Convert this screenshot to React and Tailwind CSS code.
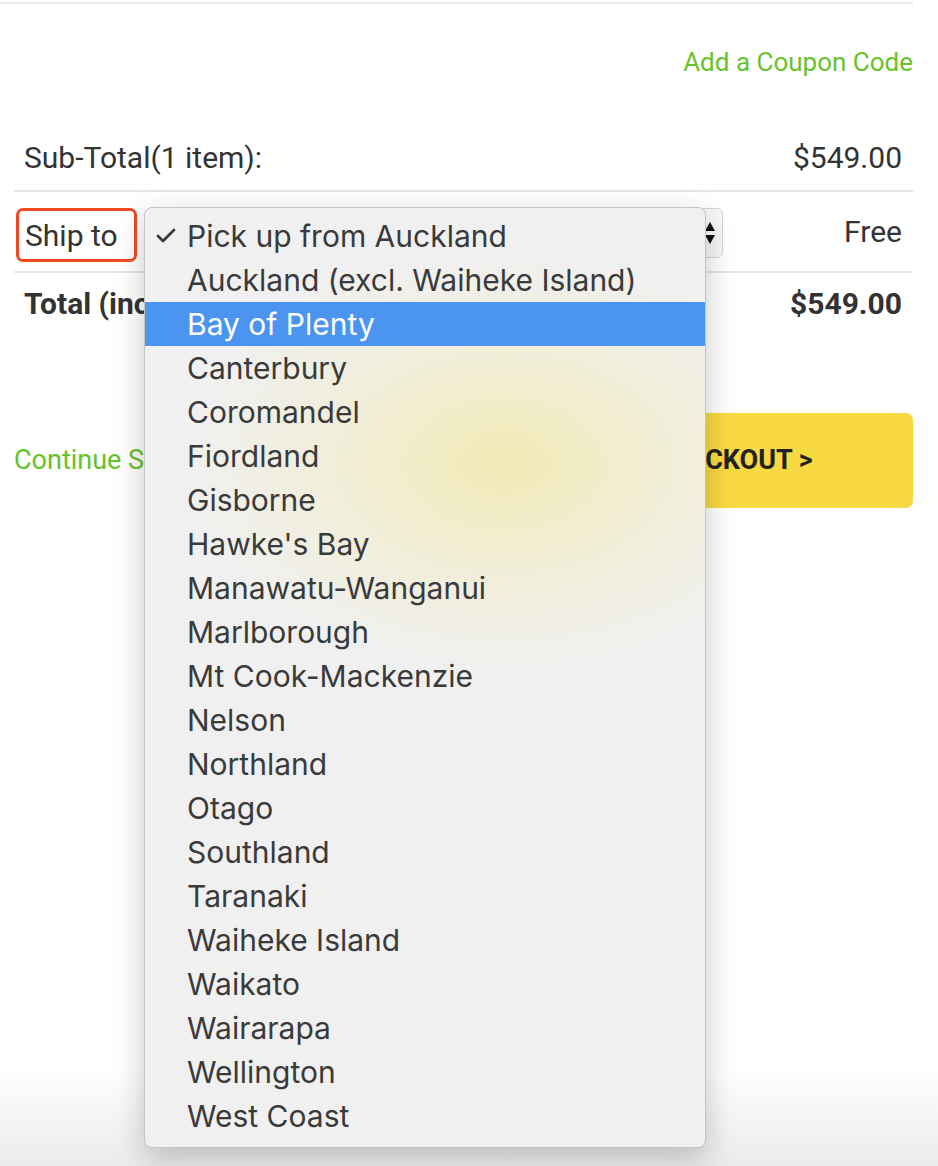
import { Check } from 'lucide-react';

const regions = [
  'Pick up from Auckland',
  'Auckland (excl. Waiheke Island)',
  'Bay of Plenty',
  'Canterbury',
  'Coromandel',
  'Fiordland',
  'Gisborne',
  "Hawke's Bay",
  'Manawatu-Wanganui',
  'Marlborough',
  'Mt Cook-Mackenzie',
  'Nelson',
  'Northland',
  'Otago',
  'Southland',
  'Taranaki',
  'Waiheke Island',
  'Waikato',
  'Wairarapa',
  'Wellington',
  'West Coast',
];

function App() {
  return (
    <div className="relative w-[938px] h-[1166px] bg-white overflow-hidden flex flex-col font-['Roboto',sans-serif] text-[#333]">
      {/* Cart summary */}
      <div className="mt-[2px] mr-[25px] border-t-2 border-[#e8e8e8]">
        <div className="pt-[42px] flex justify-end">
          <a className="text-[26px] leading-[32px] text-[#68c22c]">Add a Coupon Code</a>
        </div>

        <div className="ml-[14px] mt-[63px]">
          <div className="flex items-center justify-between pl-[10px] pr-[11px] pb-[15px] border-b-2 border-[#e6e6e6] text-[30px] leading-[34px]">
            <span>Sub-Total(1 item):</span>
            <span>$549.00</span>
          </div>

          <div className="flex items-start h-[81px] pt-[16px] pl-[2px] pr-[11px] border-b-2 border-[#e6e6e6] text-[30px]">
            <span className="h-[54px] w-[121px] flex items-center pl-[6px] border-[3px] border-[#f04a24] rounded-[7px]">Ship to</span>
            {/* native select, mostly hidden by its open popup */}
            <div className="ml-[11px] w-[575px] h-[50px] border border-[#d4d4d4] rounded-[6px] bg-[#f7f7f7] flex items-center justify-end pr-[6px]">
              <svg width="12" height="30" viewBox="0 0 12 30">
                <path d="M6 4 L11 13 L1 13 Z" fill="#111" />
                <path d="M6 26 L11 17 L1 17 Z" fill="#111" />
              </svg>
            </div>
            <span className="ml-auto leading-[48px]">Free</span>
          </div>

          <div className="flex items-center justify-between h-[60px] pl-[10px] pr-[11px] text-[30px] font-bold">
            <span>Total (incl. GST):</span>
            <span>$549.00</span>
          </div>

          <div className="mt-[80px] flex items-center justify-between">
            <a className="text-[27px] text-[#68c22c]">Continue Shopping</a>
            <button className="w-[360px] h-[95px] rounded-[7px] bg-[#f9d942] text-[27px] font-bold text-[#222] flex items-center justify-center">
              CHECKOUT &gt;
            </button>
          </div>
        </div>
      </div>

      <div className="flex-1" />
      {/* bottom fade */}
      <div className="h-[100px] bg-gradient-to-b from-white to-[#ebebeb]" />

      {/* open select popup */}
      <div className="absolute left-[144px] top-[207px] w-[562px] h-[941px] rounded-[8px] border border-[#c4c4c4] bg-[#f0f0f0] shadow-[0_10px_30px_rgba(0,0,0,0.22)] overflow-hidden font-['Inter',sans-serif]">
        <div className="absolute inset-0 bg-[radial-gradient(ellipse_320px_210px_at_360px_255px,rgba(242,233,178,0.95),rgba(242,236,195,0.55)_50%,rgba(240,240,240,0)_100%)]" />
        <ul className="relative pt-[6px]">
          {regions.map((name, i) => (
            <li
              key={name}
              className={
                i === 2
                  ? 'h-[44px] flex items-center pl-[42px] text-[30px] bg-[#4b95f1] text-white'
                  : 'relative h-[44px] flex items-center pl-[42px] text-[30px] text-[#3a3a3a]'
              }
            >
              {i === 0 && (
                <Check className="absolute left-[9px] w-[24px] h-[24px]" strokeWidth={2.75} />
              )}
              {name}
            </li>
          ))}
        </ul>
      </div>
    </div>
  );
}

export default App;
